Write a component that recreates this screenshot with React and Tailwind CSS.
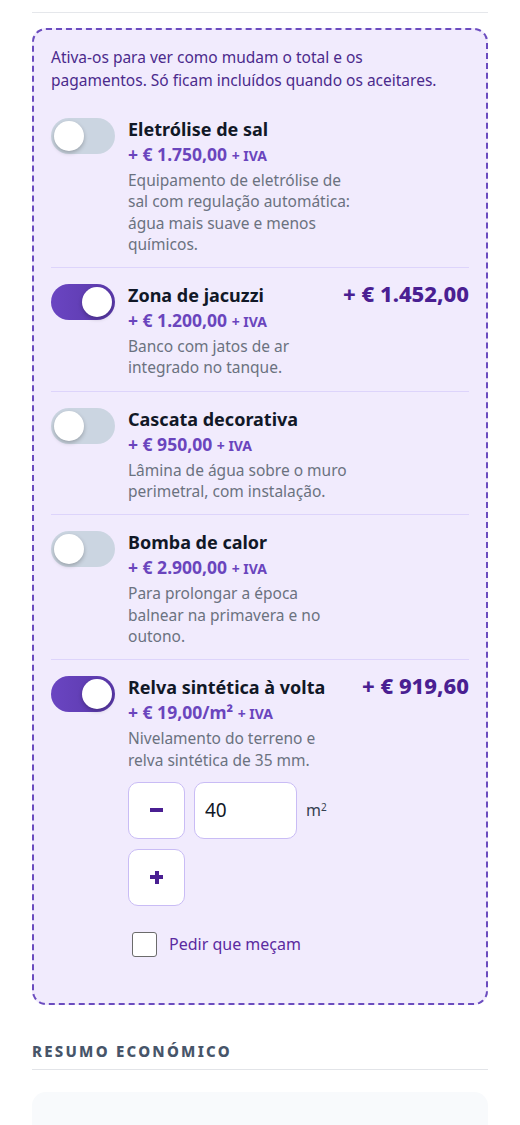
import { useState } from "react";

const extras = [
  {
    id: "sal",
    title: "Eletrólise de sal",
    price: "+ € 1.750,00",
    desc: ["Equipamento de eletrólise de", "sal com regulação automática:", "água mais suave e menos", "químicos."],
    on: false,
  },
  {
    id: "jacuzzi",
    title: "Zona de jacuzzi",
    price: "+ € 1.200,00",
    desc: ["Banco com jatos de ar", "integrado no tanque."],
    on: true,
    total: "+ € 1.452,00",
  },
  {
    id: "cascata",
    title: "Cascata decorativa",
    price: "+ € 950,00",
    desc: ["Lâmina de água sobre o muro", "perimetral, com instalação."],
    on: false,
  },
  {
    id: "bomba",
    title: "Bomba de calor",
    price: "+ € 2.900,00",
    desc: ["Para prolongar a época", "balnear na primavera e no", "outono."],
    on: false,
  },
  {
    id: "relva",
    title: "Relva sintética à volta",
    price: "+ € 19,00/m²",
    desc: ["Nivelamento do terreno e", "relva sintética de 35 mm."],
    on: true,
    total: "+ € 919,60",
    area: true,
  },
];

function Toggle({ on, onClick }) {
  return (
    <button
      onClick={onClick}
      className={
        "relative w-[64px] h-[36px] rounded-full shrink-0 " +
        (on ? "bg-gradient-to-r from-[#6a45c2] to-[#5a39aa]" : "bg-[#cbd5e1]")
      }
    >
      <span
        className={
          "absolute top-[3px] w-[30px] h-[30px] rounded-full bg-white shadow-[0_2px_4px_rgba(0,0,0,0.25)] " +
          (on ? "left-[31px]" : "left-[3px]")
        }
      />
    </button>
  );
}

export default function App() {
  const [state, setState] = useState(Object.fromEntries(extras.map((e) => [e.id, e.on])));
  const [area, setArea] = useState(40);

  return (
    <div className="min-h-screen bg-white font-['Noto_Sans',sans-serif] px-[32px] pt-[12px] pb-[40px]">
      <div className="border-t border-[#e5e7eb]" />

      {/* Extras */}
      <div className="mt-[15px] rounded-[14px] border-2 border-dashed border-[#6b4cbf] bg-[#f1ebfd] px-[17px] pt-[16px] pb-[34px]">
        <p className="text-[15.5px] leading-[23px] text-[#4b2a8c]">
          Ativa-os para ver como mudam o total e os
          <br />
          pagamentos. Só ficam incluídos quando os aceitares.
        </p>

        <div className="mt-[10px]">
          {extras.map((e, i) => (
            <div
              key={e.id}
              className={"flex gap-[13px] pt-[16px] pb-[12px] " + (i > 0 ? "border-t border-[#ddd4fb]" : "")}
            >
              <Toggle on={state[e.id]} onClick={() => setState({ ...state, [e.id]: !state[e.id] })} />
              <div className="flex-1 min-w-0">
                <div className="flex items-baseline justify-between gap-3">
                  <div className="text-[18px] leading-[22px] font-bold text-[#111827]">{e.title}</div>
                  {state[e.id] && e.total && (
                    <div className="text-[22px] leading-[18px] font-extrabold text-[#4a1f92] whitespace-nowrap">
                      {e.total}
                    </div>
                  )}
                </div>
                <div className="mt-[2px] text-[17.5px] leading-[24px] font-bold text-[#6a45bd]">
                  {e.price} <span className="text-[14px] leading-[14px]">+ IVA</span>
                </div>
                <p className="mt-[4px] text-[15.5px] leading-[21.3px] text-[#6b7280]">
                  {e.desc.map((l, j) => (
                    <span key={j} className="block">
                      {l}
                    </span>
                  ))}
                </p>

                {e.area && (
                  <>
                    <div className="mt-[11px] flex flex-wrap items-center gap-x-[9px] gap-y-[10px] max-w-[210px]">
                      <button
                        onClick={() => setArea(Math.max(0, area - 1))}
                        className="w-[57px] h-[57px] rounded-[10px] border border-[#c9bcf5] bg-white flex items-center justify-center"
                      >
                        <span className="block w-[13px] h-[4px] bg-[#4a1f92]" />
                      </button>
                      <input
                        value={area}
                        onChange={(ev) => setArea(ev.target.value)}
                        className="w-[103px] h-[57px] rounded-[10px] border border-[#c9bcf5] bg-white px-[10px] text-[19px] text-[#111827] outline-none"
                      />
                      <span className="text-[16px] text-[#374151]">
                        m<sup className="text-[10px]">2</sup>
                      </span>
                      <button
                        onClick={() => setArea(Number(area) + 1)}
                        className="relative w-[57px] h-[57px] rounded-[10px] border border-[#c9bcf5] bg-white flex items-center justify-center"
                      >
                        <span className="absolute w-[13px] h-[4px] bg-[#4a1f92]" />
                        <span className="absolute w-[4px] h-[13px] bg-[#4a1f92]" />
                      </button>
                    </div>
                    <label className="mt-[26px] ml-[4px] flex items-center gap-[12px]">
                      <span className="w-[25px] h-[25px] rounded-[3px] border-[1.5px] border-[#6b6b6b] bg-white" />
                      <span className="text-[16px] text-[#5b2aa0]">Pedir que meçam</span>
                    </label>
                  </>
                )}
              </div>
            </div>
          ))}
        </div>
      </div>

      {/* Resumo */}
      <h2 className="mt-[36px] pb-[8px] border-b border-[#e2e4e8] text-[15px] leading-[20px] font-extrabold tracking-[0.15em] text-[#475569] uppercase">
        Resumo económico
      </h2>
      <div className="mt-[22px] h-[120px] rounded-[14px] bg-[#f8fafc]" />
    </div>
  );
}
